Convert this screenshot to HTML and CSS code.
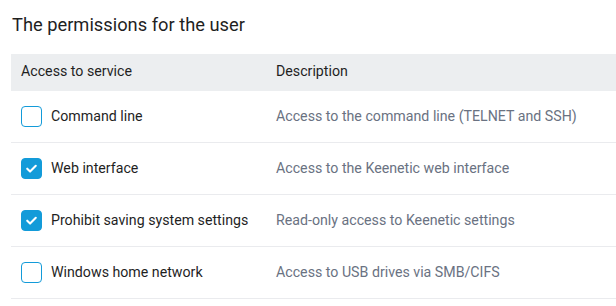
FILE: index.html
```html
<!DOCTYPE html>
<html lang="en">
<head>
    <meta charset="UTF-8">
    <title>User permissions</title>
    <link rel="stylesheet" href="styles.css">
</head>
<body>
    <section class="permissions">
        <h2 class="title">The permissions for the user</h2>
        <div class="table">
            <div class="row head">
                <div class="cell service">Access to service</div>
                <div class="cell desc">Description</div>
            </div>
            <div class="row">
                <label class="cell service"><span class="box"></span>Command line</label>
                <div class="cell desc">Access to the command line (TELNET and SSH)</div>
            </div>
            <div class="row">
                <label class="cell service"><span class="box checked"><svg viewBox="0 0 20 20"><path d="M5.5 10.2l3 3 6-6"/></svg></span>Web interface</label>
                <div class="cell desc">Access to the Keenetic web interface</div>
            </div>
            <div class="row">
                <label class="cell service"><span class="box checked"><svg viewBox="0 0 20 20"><path d="M5.5 10.2l3 3 6-6"/></svg></span>Prohibit saving system settings</label>
                <div class="cell desc">Read-only access to Keenetic settings</div>
            </div>
            <div class="row">
                <label class="cell service"><span class="box"></span>Windows home network</label>
                <div class="cell desc">Access to USB drives via SMB/CIFS</div>
            </div>
        </div>
    </section>
</body>
</html>
```

FILE: styles.css
```css
:root {
    --accent: #139bd9;
    --text: #1f1f1f;
    --muted: #6a7282;
    --line: #eaebee;
    --head-bg: #eceef0;
}

* {
    margin: 0;
    padding: 0;
    box-sizing: border-box;
}

body {
    font-family: Roboto, 'Liberation Sans', sans-serif;
    color: var(--text);
    background: #fff;
    padding: 11px 0 0 11px;
}

.title {
    font-size: 18.3px;
    font-weight: 400;
    line-height: 28px;
    padding-left: 1px;
    margin-bottom: 15px;
}

.table {
    width: 620px;
}

.row {
    display: flex;
    align-items: center;
    height: 52px;
    border-bottom: 1px solid var(--line);
    font-size: 14.2px;
    line-height: 18px;
}

.row.head {
    height: 37px;
    background: var(--head-bg);
    border-bottom: none;
    padding-bottom: 3px;
}

.cell {
    display: flex;
    align-items: center;
    gap: 9px;
}

.service {
    width: 255px;
    padding-left: 10px;
    padding-bottom: 2px;
}

.desc {
    padding-left: 10px;
    padding-bottom: 2px;
    color: var(--muted);
}

.head .service,
.head .desc {
    padding-bottom: 0;
}

.head .desc {
    color: var(--text);
}

.box {
    width: 21px;
    height: 21px;
    border: 1.5px solid var(--accent);
    border-radius: 4px;
    flex: none;
    display: flex;
    margin-bottom: -2px;
}

.box.checked {
    background: var(--accent);
}

.box svg {
    width: 100%;
    height: 100%;
}

.box path {
    fill: none;
    stroke: #fff;
    stroke-width: 2.2;
    stroke-linecap: round;
    stroke-linejoin: round;
}
```
